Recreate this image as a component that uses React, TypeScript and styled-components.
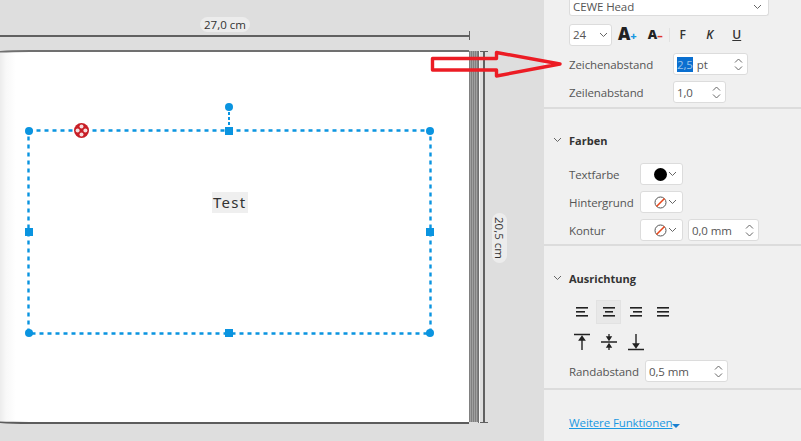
import React from 'react';
import styled, {createGlobalStyle} from 'styled-components';

const GlobalStyle = createGlobalStyle`
    html, body {
        margin: 0;
        padding: 0;
        background: #dedede;
    }
`;

const Screen = styled.div`
    position: relative;
    width: 801px;
    height: 441px;
    display: flex;
    overflow: hidden;
    font-family: 'Open Sans', 'Noto Sans', sans-serif;
    font-size: 12px;
    color: #444;
`;

const Canvas = styled.div`
    position: relative;
    width: 544px;
    flex-shrink: 0;
    background: #dedede;
`;

const Page = styled.div`
    position: absolute;
    left: -14px;
    top: 50px;
    width: 483px;
    height: 374px;
    box-sizing: border-box;
    background: linear-gradient(90deg, #ececec 14px, #f8f8f8 20px, #fff 30px);
    border-top: 2px solid #707070;
    border-bottom: 2px solid #5c5c5c;
    border-radius: 44px 0 0 44px / 4px 0 0 4px;
`;

const Spine = styled.div`
    position: absolute;
    left: 469px;
    top: 51px;
    width: 9px;
    height: 371px;
    background: repeating-linear-gradient(90deg, #808080 0 1px, #a0a0a0 1px 2px);
`;

const SpineEdge = styled.div`
    position: absolute;
    left: 478px;
    top: 51px;
    width: 1px;
    height: 372px;
    background: #707070;
    box-shadow: 1px 0 0 #f4f4f4;
`;

const DimensionH = styled.div`
    position: absolute;
    left: 0;
    top: 35px;
    width: 470px;
    height: 2px;
    background: #606060;

    &::after {
        content: '';
        position: absolute;
        right: 0;
        top: -4px;
        width: 1px;
        height: 9px;
        background: #606060;
    }
`;

const DimensionV = styled.div`
    position: absolute;
    left: 483px;
    top: 51px;
    width: 2px;
    height: 372px;
    background: #606060;

    &::before, &::after {
        content: '';
        position: absolute;
        left: -3px;
        width: 8px;
        height: 1px;
        background: #606060;
    }

    &::before {
        top: 0;
    }

    &::after {
        bottom: 0;
    }
`;

const DimensionLabel = styled.div<{$vertical?: boolean}>`
    position: absolute;
    left: ${(p) => (p.$vertical ? '492px' : '200px')};
    top: ${(p) => (p.$vertical ? '213px' : '17px')};
    padding: ${(p) => (p.$vertical ? '4px 0' : '0 4px')};
    width: ${(p) => (p.$vertical ? '15px' : 'auto')};
    height: ${(p) => (p.$vertical ? 'auto' : '15px')};
    line-height: 15px;
    font-size: 11.5px;
    white-space: nowrap;
    color: #333;
    background: #ececec;
    border-radius: 8px;
    writing-mode: ${(p) => (p.$vertical ? 'vertical-rl' : 'horizontal-tb')};
`;

const Frame = styled.svg`
    position: absolute;
    left: 0;
    top: 0;
`;

const Handle = styled.div<{$x: number; $y: number; $square?: boolean}>`
    position: absolute;
    left: ${(p) => p.$x - 4}px;
    top: ${(p) => p.$y - 4}px;
    width: 8px;
    height: 8px;
    background: #0a94e0;
    border-radius: ${(p) => (p.$square ? '0' : '50%')};
`;

const MoveIcon = styled.svg`
    position: absolute;
    left: 74px;
    top: 123px;
`;

const TextBox = styled.div`
    position: absolute;
    left: 212px;
    top: 192px;
    height: 21px;
    padding: 0 1px;
    line-height: 21px;
    font-family: 'Noto Sans', sans-serif;
    font-size: 15px;
    letter-spacing: 1.3px;
    color: #333;
    background: #efefef;
`;

const Panel = styled.div`
    flex: 1;
    display: flex;
    flex-direction: column;
    background: #f0f0f0;
`;

const Section = styled.div<{$height: number}>`
    height: ${(p) => p.$height}px;
    box-sizing: border-box;
    flex-shrink: 0;
    padding-left: 25px;
    border-bottom: 2px solid #dcdcdc;
`;

const FontSelect = styled.div`
    width: 200px;
    height: 16px;
    box-sizing: border-box;
    padding: 0 6px 1px 3px;
    display: flex;
    align-items: center;
    justify-content: space-between;
    font-size: 11.5px;
    line-height: 14px;
    letter-spacing: -0.1px;
    color: #555;
    background: #fff;
    border: 1px solid #dcdcdc;
    border-top: none;
    border-radius: 0 0 3px 3px;
`;

const FontRow = styled.div`
    display: flex;
    align-items: center;
    height: 23px;
    margin-top: 7px;
`;

const Box = styled.div<{$width: number; $left?: number}>`
    width: ${(p) => p.$width}px;
    height: 22px;
    box-sizing: border-box;
    flex-shrink: 0;
    margin-left: ${(p) => p.$left ?? 0}px;
    padding: 0 3px;
    display: flex;
    align-items: center;
    background: #fff;
    border: 1px solid #dcdcdc;
    border-radius: 3px;
    font-size: 11.5px;
    letter-spacing: -0.1px;
    color: #555;
`;

const SwatchBox = styled(Box)`
    padding: 0 5px 0 0;
    justify-content: flex-end;
    gap: 1px;
`;

const BoxValue = styled.span`
    flex: 1;
    white-space: nowrap;
`;

const Selected = styled.span`
    background: #0a6fd0;
    color: #9cc4ea;
    margin-right: 4px;
`;

const Caret = styled.svg`
    flex-shrink: 0;
`;

const Stepper = styled.div`
    display: flex;
    flex-direction: column;
    gap: 3px;
    margin-right: 1px;
`;

const FieldRow = styled.div<{$top: number}>`
    display: flex;
    align-items: center;
    height: 22px;
    margin-top: ${(p) => p.$top}px;
`;

const FieldLabel = styled.div<{$width: number}>`
    width: ${(p) => p.$width}px;
    flex-shrink: 0;
    font-size: 11.5px;
    letter-spacing: -0.1px;
    white-space: nowrap;
    color: #555;
`;

const StyleButton = styled.div<{$width?: number; $italic?: boolean; $underline?: boolean; $left?: number}>`
    width: ${(p) => p.$width ?? 20}px;
    margin-left: ${(p) => p.$left ?? 0}px;
    text-align: center;
    font-family: 'Open Sans', sans-serif;
    font-size: 12px;
    font-weight: 600;
    font-style: ${(p) => (p.$italic ? 'italic' : 'normal')};
    text-decoration: ${(p) => (p.$underline ? 'underline' : 'none')};
    color: #333;
`;

const GrowLetter = styled.span<{$size: number}>`
    font-size: ${(p) => p.$size}px;
    font-weight: 800;
    color: #222;
`;

const Sign = styled.span<{$color: string}>`
    font-size: 11px;
    font-weight: 800;
    color: ${(p) => p.$color};
`;

const GrowButton = styled.div<{$left: number}>`
    margin-left: ${(p) => p.$left}px;
    display: flex;
    align-items: baseline;
    line-height: 20px;
`;

const ToolDivider = styled.div`
    width: 1px;
    height: 14px;
    margin-left: 6px;
    background: #e2e2e2;
`;

const SectionHeader = styled.div<{$top: number}>`
    display: flex;
    align-items: center;
    gap: 7px;
    margin: ${(p) => p.$top}px 0 0 -16px;
    height: 18px;
    font-family: 'Open Sans', sans-serif;
    font-size: 11px;
    font-weight: 700;
    color: #333;
`;

const IconRow = styled.div<{$top: number}>`
    display: flex;
    gap: 2px;
    height: 24px;
    margin-top: ${(p) => p.$top}px;
`;

const IconButton = styled.div<{$active?: boolean}>`
    width: 25px;
    height: 24px;
    box-sizing: border-box;
    display: flex;
    align-items: center;
    justify-content: center;
    background: ${(p) => (p.$active ? '#e8e8e8' : 'transparent')};
    border: 1px solid ${(p) => (p.$active ? '#e2e2e2' : 'transparent')};
`;

const MoreLink = styled.a`
    margin: 24px 0 0 25px;
    display: flex;
    align-items: flex-end;
    font-size: 11.5px;
    letter-spacing: -0.1px;
    line-height: 17px;
    color: #1a98e2;
    text-decoration: underline;
`;

const LinkArrow = styled.span`
    width: 0;
    height: 0;
    margin: 0 0 3px 0;
    border-left: 4px solid transparent;
    border-right: 4px solid transparent;
    border-top: 4px solid #1a7fd0;
`;

const ArrowOverlay = styled.svg`
    position: absolute;
    left: 428px;
    top: 48px;
`;

const ChevronDown = ({size = 9}: {size?: number}) => (
    <Caret
        width={size}
        height={6}
        viewBox='0 0 9 6'
    >
        <path
            d='M1 1l3.5 3.5L8 1'
            fill='none'
            stroke='#666'
            strokeWidth='1'
        />
    </Caret>
);

const Spin = () => (
    <Stepper>
        <Caret
            width={9}
            height={5}
            viewBox='0 0 9 5'
        >
            <path
                d='M1 4.5L4.5 1 8 4.5'
                fill='none'
                stroke='#666'
            />
        </Caret>
        <Caret
            width={9}
            height={5}
            viewBox='0 0 9 5'
        >
            <path
                d='M1 .5L4.5 4 8 .5'
                fill='none'
                stroke='#666'
            />
        </Caret>
    </Stepper>
);

const NoColor = () => (
    <svg
        width='13'
        height='13'
        viewBox='0 0 13 13'
    >
        <circle
            cx='6.5'
            cy='6.5'
            r='5.5'
            fill='none'
            stroke='#555'
        />
        <path
            d='M2.5 10.5l8-8'
            stroke='#e8481c'
            strokeWidth='1.6'
        />
    </svg>
);

const Lines = ({rows}: {rows: number[][]}) => (
    <svg
        width='14'
        height='12'
        viewBox='0 0 14 12'
    >
        {rows.map(([from, to], i) => (
            <rect
                key={i}
                x={from}
                y={1 + (i * 4)}
                width={to - from}
                height='1.6'
                fill='#222'
            />
        ))}
    </svg>
);

const VAlign = ({mode}: {mode: 'top' | 'middle' | 'bottom'}) => (
    <svg
        width='18'
        height='18'
        viewBox='0 0 18 18'
    >
        {mode === 'top' && <path
            d='M1 1.5h16M9 17V4M6.5 7L9 3.5 11.5 7z'
            stroke='#222'
            strokeWidth='1.4'
            fill='#222'
        />}
        {mode === 'middle' && <path
            d='M1 9h16M9 1v5M9 12v5M7 4l2 3 2-3zM7 14l2-3 2 3z'
            stroke='#222'
            strokeWidth='1.3'
            fill='#222'
        />}
        {mode === 'bottom' && <path
            d='M1 16.5h16M9 1v13M6.5 11L9 14.5 11.5 11z'
            stroke='#222'
            strokeWidth='1.4'
            fill='#222'
        />}
    </svg>
);

const App = () => (
    <Screen>
        <GlobalStyle/>
        <Canvas>
            <DimensionH/>
            <DimensionLabel>{'27,0 cm'}</DimensionLabel>
            <Page/>
            <Spine/>
            <SpineEdge/>
            <DimensionV/>
            <DimensionLabel $vertical={true}>{'20,5 cm'}</DimensionLabel>
            <Frame
                width='470'
                height='400'
            >
                <rect
                    x='28.500'
                    y='130.500'
                    width='402'
                    height='203'
                    fill='none'
                    stroke='#0a94e0'
                    strokeWidth='2.4'
                    strokeDasharray='4 4'
                />
                <path
                    d='M229 107v23'
                    stroke='#0a94e0'
                    strokeWidth='2'
                    strokeDasharray='3 2'
                />
            </Frame>
            <Handle
                $x={29}
                $y={131}
            />
            <Handle
                $x={430}
                $y={131}
            />
            <Handle
                $x={29}
                $y={333}
            />
            <Handle
                $x={430}
                $y={333}
            />
            <Handle
                $x={229}
                $y={131}
                $square={true}
            />
            <Handle
                $x={29}
                $y={232}
                $square={true}
            />
            <Handle
                $x={430}
                $y={232}
                $square={true}
            />
            <Handle
                $x={229}
                $y={333}
                $square={true}
            />
            <Handle
                $x={229}
                $y={107}
            />
            <MoveIcon
                width='15'
                height='15'
                viewBox='0 0 15 15'
            >
                <circle
                    cx='7.5'
                    cy='7.5'
                    r='7.5'
                    fill='#c81e26'
                />
                <circle
                    cx='7.5'
                    cy='3.6'
                    r='2'
                    fill='#f6dede'
                />
                <circle
                    cx='7.5'
                    cy='11.4'
                    r='2'
                    fill='#f6dede'
                />
                <circle
                    cx='3.6'
                    cy='7.5'
                    r='2'
                    fill='#f6dede'
                />
                <circle
                    cx='11.4'
                    cy='7.5'
                    r='2'
                    fill='#f6dede'
                />
            </MoveIcon>
            <TextBox>{'Test'}</TextBox>
        </Canvas>
        <Panel>
            <Section $height={109}>
                <FontSelect>
                    {'CEWE Head'}
                    <ChevronDown/>
                </FontSelect>
                <FontRow>
                    <Box $width={43}>
                        <BoxValue>{'24'}</BoxValue>
                        <ChevronDown/>
                    </Box>
                    <GrowButton $left={6}>
                        <GrowLetter $size={17}>{'A'}</GrowLetter>
                        <Sign $color='#1a98e2'>{'+'}</Sign>
                    </GrowButton>
                    <GrowButton $left={11}>
                        <GrowLetter $size={13}>{'A'}</GrowLetter>
                        <Sign $color='#e0342c'>{'–'}</Sign>
                    </GrowButton>
                    <ToolDivider/>
                    <StyleButton $left={3}>{'F'}</StyleButton>
                    <StyleButton
                        $left={7}
                        $italic={true}
                    >
                        {'K'}
                    </StyleButton>
                    <StyleButton
                        $left={7}
                        $underline={true}
                    >
                        {'U'}
                    </StyleButton>
                </FontRow>
                <FieldRow $top={7}>
                    <FieldLabel $width={104}>{'Zeichenabstand'}</FieldLabel>
                    <Box $width={75}>
                        <BoxValue><Selected>{'2,5'}</Selected>{'pt'}</BoxValue>
                        <Spin/>
                    </Box>
                </FieldRow>
                <FieldRow $top={6}>
                    <FieldLabel $width={104}>{'Zeilenabstand'}</FieldLabel>
                    <Box $width={53}>
                        <BoxValue>{'1,0'}</BoxValue>
                        <Spin/>
                    </Box>
                </FieldRow>
            </Section>
            <Section $height={137}>
                <SectionHeader $top={22}>
                    <ChevronDown/>
                    {'Farben'}
                </SectionHeader>
                <FieldRow $top={14}>
                    <FieldLabel $width={71}>{'Textfarbe'}</FieldLabel>
                    <SwatchBox $width={43}>
                        <svg
                            width='13'
                            height='13'
                            viewBox='0 0 13 13'
                        >
                            <circle
                                cx='6.5'
                                cy='6.5'
                                r='6.5'
                                fill='#000'
                            />
                        </svg>
                        <ChevronDown/>
                    </SwatchBox>
                </FieldRow>
                <FieldRow $top={6}>
                    <FieldLabel $width={71}>{'Hintergrund'}</FieldLabel>
                    <SwatchBox $width={43}>
                        <NoColor/>
                        <ChevronDown/>
                    </SwatchBox>
                </FieldRow>
                <FieldRow $top={6}>
                    <FieldLabel $width={71}>{'Kontur'}</FieldLabel>
                    <SwatchBox $width={43}>
                        <NoColor/>
                        <ChevronDown/>
                    </SwatchBox>
                    <Box
                        $width={71}
                        $left={5}
                    >
                        <BoxValue>{'0,0 mm'}</BoxValue>
                        <Spin/>
                    </Box>
                </FieldRow>
            </Section>
            <Section $height={144}>
                <SectionHeader $top={23}>
                    <ChevronDown/>
                    {'Ausrichtung'}
                </SectionHeader>
                <IconRow $top={13}>
                    <IconButton>
                        <Lines
                            rows={[
                                [1, 13],
                                [1, 10],
                                [1, 13],
                            ]}
                        />
                    </IconButton>
                    <IconButton $active={true}>
                        <Lines
                            rows={[
                                [1, 13],
                                [3, 11],
                                [1, 13],
                            ]}
                        />
                    </IconButton>
                    <IconButton>
                        <Lines
                            rows={[
                                [1, 13],
                                [4, 13],
                                [1, 13],
                            ]}
                        />
                    </IconButton>
                    <IconButton>
                        <Lines
                            rows={[
                                [1, 13],
                                [1, 13],
                                [1, 13],
                            ]}
                        />
                    </IconButton>
                </IconRow>
                <IconRow $top={6}>
                    <IconButton><VAlign mode='top'/></IconButton>
                    <IconButton><VAlign mode='middle'/></IconButton>
                    <IconButton><VAlign mode='bottom'/></IconButton>
                </IconRow>
                <FieldRow $top={6}>
                    <FieldLabel $width={76}>{'Randabstand'}</FieldLabel>
                    <Box $width={83}>
                        <BoxValue>{'0,5 mm'}</BoxValue>
                        <Spin/>
                    </Box>
                </FieldRow>
            </Section>
            <MoreLink>
                {'Weitere Funktionen'}
                <LinkArrow/>
            </MoreLink>
        </Panel>
        <ArrowOverlay
            width='140'
            height='34'
            viewBox='0 0 140 34'
        >
            <path
                d='M4.5 10.5h64v-6L132 16 68.500 28v-6h-64z'
                fill='none'
                stroke='#ec1c24'
                strokeWidth='3.4'
                strokeLinejoin='round'
            />
        </ArrowOverlay>
    </Screen>
);

export default App;
